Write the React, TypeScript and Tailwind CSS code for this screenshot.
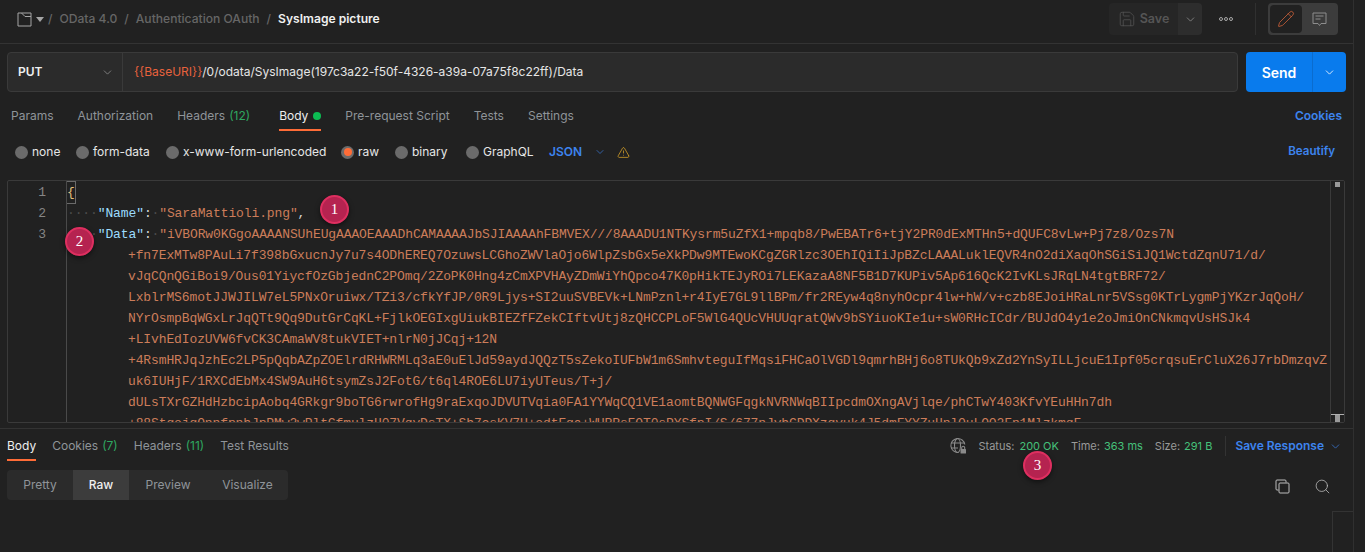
import { ChevronDown, Pencil, Save, Search, TriangleAlert } from "lucide-react";

const ui = "font-['Inter','Liberation_Sans',sans-serif]";
const mono = "font-['Liberation_Mono','DejaVu_Sans_Mono',monospace]";

const wrapped = [
  "+fn7ExMTw8PAuLi7f398bGxucnJy7u7s4ODhEREQ7OzuwsLCGhoZWVlaOjo6WlpZsbGx5eXkPDw9MTEwoKCgZGRlzc3OEhIQiIiJpBZcLAAALuklEQVR4nO2diXaqOhSGiSiJQ1WctdZqnU71/d/",
  "vJqCQnQGiBoi9/Ous01YiycfOzGbjednC2POmq/2ZoPK0Hng4zCmXPVHAyZDmWiYhQpco47K0pHikTEJyROi7LEKazaA8NF5B1D7KUPiv5Ap616QcK2IvKLsJRqLN4tgtBRF72/",
  "LxblrMS6motJJWJILW7eL5PNxOruiwx/TZi3/cfkYfJP/0R9Ljys+SI2uuSVBEVk+LNmPznl+r4IyE7GL9llBPm/fr2REyw4q8nyhOcpr4lw+hW/v+czb8EJoiHRaLnr5VSsg0KTrLygmPjYKzrJqQoH/",
  "NYrOsmpBqWGxLrJqQTt9Qq9DutGrCqKL+FjlkOEGIxgUiukBIEZfFZekCIftvUtj8zQHCCPLoF5WlG4QUcVHUUqratQWv9bSYiuoKIe1u+sW0RHcICdr/BUJdO4y1e2oJmiOnCNkmqvUsHSJk4",
  "+LIvhEdIozUVW6fvCK3CAmaWV8tukVIET+nlrN0jJCqj+12N",
  "+4RsmHRJqJzhEc2LP5pQqbAZpZOElrdRHWRMLq3aE0uElJd59aydJQQzT5sZekoIUFbW1m6SmhvteguIfMqsiFHCaOlVGDl9qmrhBHj6o8TUkQb9xZd2YnSyILLjcuE1Ipf05crqsuErCluX26J7rbDmzqvZ",
  "uk6IUHjF/1RXCdEbMx4SW9AuH6tsymZsJ2FotG/t6ql4ROE6LU7iyUTeus/T+j/",
  "dULsTXrGZHdHzbcipAobq4GRkgr9boTG6rwrofHg9raExqoJDVUTVqia0FA1YYWqCQ1VE1aomtBQNWGFqgkNVRNWqBIIpcdmOXngAVjlqe/phCTwY403KfvYEuHHn7dh",
  "+88StgojgOnnfpnhJpPMw2wPltCfmulzH07VqyDsTX+Sb7csKV7U+odtEga+WURRsFOT0sPYSfpI/S/677nJvbCDDXzgvuk4J5dmFYYZuHnlOuLQO2Fn1MlzkmqF",
];

function Tab({ label, count, active, dot, cls }: { label: string; count?: string; active?: boolean; dot?: boolean; cls?: string }) {
  return (
    <div className={`relative flex items-center h-[30px] ${active ? "text-[#ededed]" : "text-[#8f9499]"} ${cls ?? ""}`}>
      <span>{label}</span>
      {count && <span className="ml-1 text-[#2fa760]">{count}</span>}
      {dot && <span className="ml-[5px] w-2 h-2 rounded-full bg-[#0cbb52]" />}
      {active && <span className="absolute left-0 right-0 bottom-0 h-[2px] bg-[#ff6c37]" />}
    </div>
  );
}

function Radio({ label, active, cls }: { label: string; active?: boolean; cls: string }) {
  return (
    <div className={`flex items-center ${cls}`}>
      <span className="w-[13px] h-[13px] rounded-full bg-[#6b6b6b] flex items-center justify-center mr-[4px]">
        {active && <span className="w-[8px] h-[8px] rounded-full bg-[#ff6c37]" />}
      </span>
      <span className="text-[#e6e6e6]">{label}</span>
    </div>
  );
}

function Badge({ n, cls }: { n: string; cls: string }) {
  return (
    <div className={`absolute w-[29px] h-[29px] rounded-full bg-[#b52350] border-2 border-[#de2f60] shadow-[0_2px_5px_rgba(0,0,0,0.5)] flex items-center justify-center text-[15px] text-white font-['Liberation_Serif',serif] ${cls}`}>
      {n}
    </div>
  );
}

function DocIcon() {
  return (
    <svg width="15" height="15" viewBox="0 0 15 15" fill="none" stroke="#a6a6a6" strokeWidth="1">
      <path d="M1 1h13v13H1z" />
      <path d="M4.5 1l3.5 3.5h6" />
    </svg>
  );
}

function GlobeLock() {
  return (
    <svg width="18" height="18" viewBox="0 0 18 18" fill="none" stroke="#8a8a8a" strokeWidth="1.1">
      <path d="M9.5 15.5A7 7 0 1 1 15.8 7.5" />
      <ellipse cx="8.5" cy="8.5" rx="3" ry="7" />
      <path d="M2 6h13M2 11h7" />
      <rect x="11.5" y="12" width="5.5" height="4.5" rx="0.5" fill="#8a8a8a" stroke="none" />
      <path d="M12.7 12v-1.2a1.5 1.5 0 0 1 3 0V12" />
    </svg>
  );
}

function CommentIcon() {
  return (
    <svg width="15" height="15" viewBox="0 0 15 15" fill="none" stroke="#8d8d8d" strokeWidth="1">
      <path d="M1 1h13v10.5H9l-1.5 2-1.5-2H1z M3.5 4h8 M3.5 7h5" />
    </svg>
  );
}

function CopyIcon() {
  return (
    <svg width="15" height="15" viewBox="0 0 15 15" fill="none" stroke="#bdbdbd" strokeWidth="1">
      <rect x="4" y="4" width="10" height="10" rx="1" />
      <path d="M3.5 11H2a1 1 0 0 1-1-1V2a1 1 0 0 1 1-1h8a1 1 0 0 1 1 1v1.5" />
    </svg>
  );
}

const Sep = () => <span className="text-[#666666] mx-[7px]">/</span>;

export default function App() {
  return (
    <div className={`relative w-[1365px] h-[552px] overflow-hidden bg-[#212121] ${ui} text-[12px]`}>
      <div className="w-[1354px] h-full border-r border-[#303030] flex flex-col">
        {/* top bar */}
        <div className="h-[44px] shrink-0 border-b border-[#333333] flex items-center pl-[17px] pr-[15px] pb-[5px]">
          <DocIcon />
          <span className="ml-[4px] w-0 h-0 border-x-[4px] border-x-transparent border-t-[5px] border-t-[#a6a6a6]" />
          <div className="flex items-center text-[12.1px] text-[#666666] font-medium">
            <span className="text-[#666666] ml-[4px] mr-[7px]">/</span>
            <span>OData 4.0</span>
            <Sep />
            <span>Authentication OAuth</span>
            <Sep />
            <span className="text-[#f0f0f0] font-semibold">SysImage picture</span>
          </div>
          <div className="ml-auto flex items-center">
            <div className="w-[69px] h-[32px] bg-[#262626] rounded-l flex items-center justify-center gap-[4px] text-[#555555] text-[12.5px] font-semibold">
              <Save size={18} strokeWidth={1} />
              <span>Save</span>
            </div>
            <div className="w-[24px] h-[32px] bg-[#2d2d2d] rounded-r flex items-center justify-center">
              <ChevronDown size={13} strokeWidth={1.25} className="text-[#a0a0a0]" />
            </div>
            <div className="ml-[17px] w-[15px] flex gap-[1px]">
              <span className="w-1 h-1 rounded-full border border-[#a8a8a8]" />
              <span className="w-1 h-1 rounded-full border border-[#a8a8a8]" />
              <span className="w-1 h-1 rounded-full border border-[#a8a8a8]" />
            </div>
            <div className="ml-[21px] w-px h-[32px] bg-[#303030]" />
            <div className="ml-[12px] w-[70px] h-[32px] rounded bg-[#3c3c3c] flex items-center p-[2px]">
              <div className="w-[32px] h-[28px] rounded bg-[#212121] flex items-center justify-center">
                <Pencil size={18} strokeWidth={1} className="text-[#d9663b]" />
              </div>
              <div className="flex-1 flex items-center justify-center">
                <CommentIcon />
              </div>
            </div>
          </div>
        </div>

        {/* request row */}
        <div className="mt-[8px] px-[7px] flex h-[40px] shrink-0">
          <div className="flex-1 flex rounded border border-[#3a3a3a] bg-[#2b2b2b]">
            <div className="w-[115px] border-r border-[#3a3a3a] flex items-center justify-between pl-[10px] pr-[8px] text-[#f0f0f0] font-semibold text-[12px]">
              <span>PUT</span>
              <ChevronDown size={13} strokeWidth={1.25} className="text-[#a0a0a0]" />
            </div>
            <div className="pl-[11px] flex items-center text-[12px] text-[#e6e6e6]">
              <span className="text-[#e8623d]">{"{{BaseURI}}"}</span>
              <span>/0/odata/SysImage(197c3a22-f50f-4326-a39a-07a75f8c22ff)/Data</span>
            </div>
          </div>
          <div className="ml-[8px] w-[100px] rounded bg-[#097bed] flex text-white">
            <div className="w-[67px] border-r border-[#0a6ccf] flex items-center justify-center font-semibold text-[14px]">Send</div>
            <div className="flex-1 flex items-center justify-center">
              <ChevronDown size={13} strokeWidth={1.5} />
            </div>
          </div>
        </div>

        {/* request tabs */}
        <div className="mt-[9px] pl-[11px] pr-[11px] h-[30px] shrink-0 flex items-center gap-[24px]">
          <Tab label="Params" />
          <Tab label="Authorization" />
          <Tab label="Headers" count="(12)" />
          <Tab label="Body" dot active cls="ml-[5px]" />
          <Tab label="Pre-request Script" />
          <Tab label="Tests" />
          <Tab label="Settings" />
          <span className="ml-auto text-[#3d84ee] font-semibold">Cookies</span>
        </div>

        {/* body options */}
        <div className="mt-[10px] pl-[15px] pr-[18px] h-[22px] shrink-0 flex items-center">
          <Radio label="none" cls="w-[61px]" />
          <Radio label="form-data" cls="w-[90px]" />
          <Radio label="x-www-form-urlencoded" cls="w-[175px]" />
          <Radio label="raw" active cls="w-[54px]" />
          <Radio label="binary" cls="w-[71px]" />
          <Radio label="GraphQL" cls="w-[83px]" />
          <span className="text-[#3d84ee] font-semibold">JSON</span>
          <ChevronDown size={12} strokeWidth={1.25} className="ml-[12px] text-[#3d84ee]" />
          <TriangleAlert size={13} strokeWidth={1.25} className="ml-[11px] text-[#f0b429]" />
          <span className="ml-auto text-[#3d84ee] font-semibold text-[11.6px]">Beautify</span>
        </div>

        {/* editor */}
        <div className={`mt-[17px] mx-[7px] mr-[8px] h-[243px] shrink-0 border border-[#3a3a3a] rounded-[2px] flex overflow-hidden ${mono} text-[13px] leading-[21px]`}>
          <div className="w-[59px] shrink-0 border-r border-[#4a4a4a] text-[#858585] text-right pr-[20px] pt-[1px]">
            <div>1</div>
            <div>2</div>
            <div>3</div>
          </div>
          <div className="flex-1 min-w-0 overflow-hidden tracking-[-0.115px] pt-[1px] whitespace-nowrap text-[#cc7d5a]">
            <div><span className="inline-block outline outline-1 outline-[#6a6a6a] text-[#e5c07b]">{"{"}</span></div>
            <div>
              <span className="text-[#4c4c4c]">····</span>
              <span className="text-[#9cdcfe]">"Name"</span>
              <span className="text-[#d4d4d4]">:</span>
              <span className="text-[#4c4c4c]">·</span>
              <span>"SaraMattioli.png"</span>
              <span className="text-[#d4d4d4]">,</span>
            </div>
            <div>
              <span className="text-[#4c4c4c]">····</span>
              <span className="text-[#9cdcfe]">"Data"</span>
              <span className="text-[#d4d4d4]">:</span>
              <span className="text-[#4c4c4c]">·</span>
              <span>"iVBORw0KGgoAAAANSUhEUgAAAOEAAADhCAMAAAAJbSJIAAAAhFBMVEX///8AAADU1NTKysrm5uZfX1+mpqb8/PwEBATr6+tjY2PR0dExMTHn5+dQUFC8vLw+Pj7z8/Ozs7N</span>
            </div>
            {wrapped.map((l) => (
              <div key={l} className="pl-[61px]">{l}</div>
            ))}
          </div>
          <div className="w-[14px] shrink-0 border-l border-[#3a3a3a] flex flex-col items-center justify-between pt-[1px] bg-[#212121]">
            <span className="w-[5px] h-[5px] bg-[#9a9a9a]" />
            <div className="w-full flex flex-col items-center">
              <span className="w-full h-[1px] bg-[#b0b0b0]" />
              <span className="w-[5px] h-[7px] bg-[#9a9a9a]" />
            </div>
          </div>
        </div>

        {/* response */}
        <div className="mt-[5px] flex-1 border-t border-[#333333] relative">
          <div className="pl-[7px] pr-[11px] h-[33px] pt-[1px] flex items-center">
            <div className="flex items-center gap-[16px]">
              <Tab label="Body" active />
              <Tab label="Cookies" count="(7)" />
              <Tab label="Headers" count="(11)" />
              <Tab label="Test Results" />
            </div>
            <div className="ml-auto flex items-center text-[11px]">
              <GlobeLock />
              <span className="ml-[11px] text-[#9a9a9a]">Status:</span>
              <span className="ml-[5px] text-[#45c07a]">200 OK</span>
              <span className="ml-[12px] text-[#9a9a9a]">Time:</span>
              <span className="ml-[4px] text-[#45c07a]">363 ms</span>
              <span className="ml-[12px] text-[#9a9a9a]">Size:</span>
              <span className="ml-[4px] text-[#45c07a]">291 B</span>
              <span className="ml-[13px] w-px h-5 bg-[#333333]" />
              <span className="ml-[9px] text-[#3d84ee] font-semibold text-[12px]">Save Response</span>
              <ChevronDown size={13} strokeWidth={1.25} className="ml-[5px] text-[#3d84ee]" />
            </div>
          </div>
          <div className="mt-[8px] pl-[7px] pr-[22px] flex items-start">
            <div className="flex h-[30px] w-[281px] rounded bg-[#2b2b2b] text-[#8f9499] overflow-hidden">
              <div className="w-[66px] flex items-center justify-center">Pretty</div>
              <div className="w-[56px] flex items-center justify-center bg-[#3c3c3c] text-[#f0f0f0] font-medium">Raw</div>
              <div className="w-[78px] flex items-center justify-center">Preview</div>
              <div className="w-[81px] flex items-center justify-center">Visualize</div>
            </div>
            <div className="ml-auto flex items-center gap-[24px] mt-[8px]">
              <CopyIcon />
              <Search size={17} strokeWidth={1.1} className="text-[#bdbdbd]" />
            </div>
          </div>
          <div className="absolute right-0 top-[82px] w-[21px] h-[60px] border-t border-l border-[#333333]" />
        </div>
      </div>

      <Badge n="1" cls="left-[320px] top-[195px]" />
      <Badge n="2" cls="left-[65px] top-[227px]" />
      <Badge n="3" cls="left-[1023px] top-[451px]" />
    </div>
  );
}
